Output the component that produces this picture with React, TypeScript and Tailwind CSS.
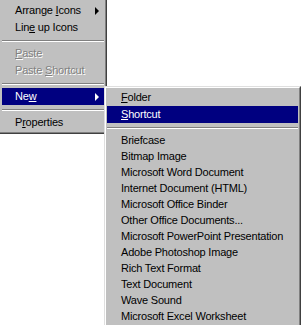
import React from 'react';

type Item =
  | { kind: 'sep' }
  | { kind: 'item'; label: string; key?: number; disabled?: boolean; active?: boolean; arrow?: boolean };

const mainItems: Item[] = [
  { kind: 'item', label: 'Arrange Icons', key: 8, arrow: true },
  { kind: 'item', label: 'Line up Icons', key: 3 },
  { kind: 'sep' },
  { kind: 'item', label: 'Paste', key: 0, disabled: true },
  { kind: 'item', label: 'Paste Shortcut', key: 6, disabled: true },
  { kind: 'sep' },
  { kind: 'item', label: 'New', key: 2, active: true, arrow: true },
  { kind: 'sep' },
  { kind: 'item', label: 'Properties', key: 1 },
];

const newTypes = [
  'Briefcase',
  'Bitmap Image',
  'Microsoft Word Document',
  'Internet Document (HTML)',
  'Microsoft Office Binder',
  'Other Office Documents...',
  'Microsoft PowerPoint Presentation',
  'Adobe Photoshop Image',
  'Rich Text Format',
  'Text Document',
  'Wave Sound',
  'Microsoft Excel Worksheet',
];

// label with the mnemonic letter underlined
function Label({ text, at }: { text: string; at?: number }) {
  if (at === undefined) return <span>{text}</span>;
  return (
    <span>
      {text.slice(0, at)}
      <u className="underline-offset-[1px]">{text[at]}</u>
      {text.slice(at + 1)}
    </span>
  );
}

function Separator() {
  return (
    <div className="h-[9px] flex flex-col justify-center">
      <div className="h-px bg-[#808080]" />
      <div className="h-px bg-white" />
    </div>
  );
}

function Row({ item, pad, h }: { item: Extract<Item, { kind: 'item' }>; pad: string; h: string }) {
  const tone = item.active
    ? 'bg-[#000080] text-white'
    : item.disabled
      ? 'text-[#808080] [text-shadow:1px_1px_0_#ffffff]'
      : 'text-black';
  return (
    <div className={`flex items-center ${h} ${pad} ${tone}`}>
      <Label text={item.label} at={item.key} />
      {item.arrow && (
        <span
          className={`ml-auto mr-[5px] w-0 h-0 border-y-4 border-y-transparent border-l-4 ${
            item.active ? 'border-l-white' : 'border-l-black'
          }`}
        />
      )}
    </div>
  );
}

export default function App() {
  return (
    <div
      className="relative w-[301px] h-[325px] bg-white overflow-hidden text-[11px] tracking-[-0.2px] leading-none"
      style={{ fontFamily: '"Liberation Sans", Arial, sans-serif' }}
    >
      {/* desktop context menu */}
      <div className="w-[107px] bg-[#c0c0c0] border-r border-b border-[#404040]">
        <div className="border-r border-b border-[#808080] pt-[2px] pl-[2px] pb-px pr-px">
          {mainItems.map((it, i) =>
            it.kind === 'sep' ? (
              <Separator key={i} />
            ) : (
              <Row key={i} item={it} pad="pl-[13px]" h="h-[17px]" />
            ),
          )}
        </div>
      </div>

      {/* New submenu */}
      <div className="absolute left-[104px] top-[86px] w-[197px] bg-[#c0c0c0] border-l border-t border-[#dfdfdf] border-r border-r-[#404040] border-b border-b-[#404040]">
        <div className="border-l border-t border-white border-r border-r-[#808080] border-b border-b-[#808080] p-px">
          <Row item={{ kind: 'item', label: 'Folder', key: 0 }} pad="pl-[14px]" h="h-[17px]" />
          <Row item={{ kind: 'item', label: 'Shortcut', key: 0, active: true }} pad="pl-[14px]" h="h-[17px]" />
          <Separator />
          {newTypes.map((t) => (
            <Row key={t} item={{ kind: 'item', label: t }} pad="pl-[14px]" h="h-[16px]" />
          ))}
        </div>
      </div>
    </div>
  );
}
